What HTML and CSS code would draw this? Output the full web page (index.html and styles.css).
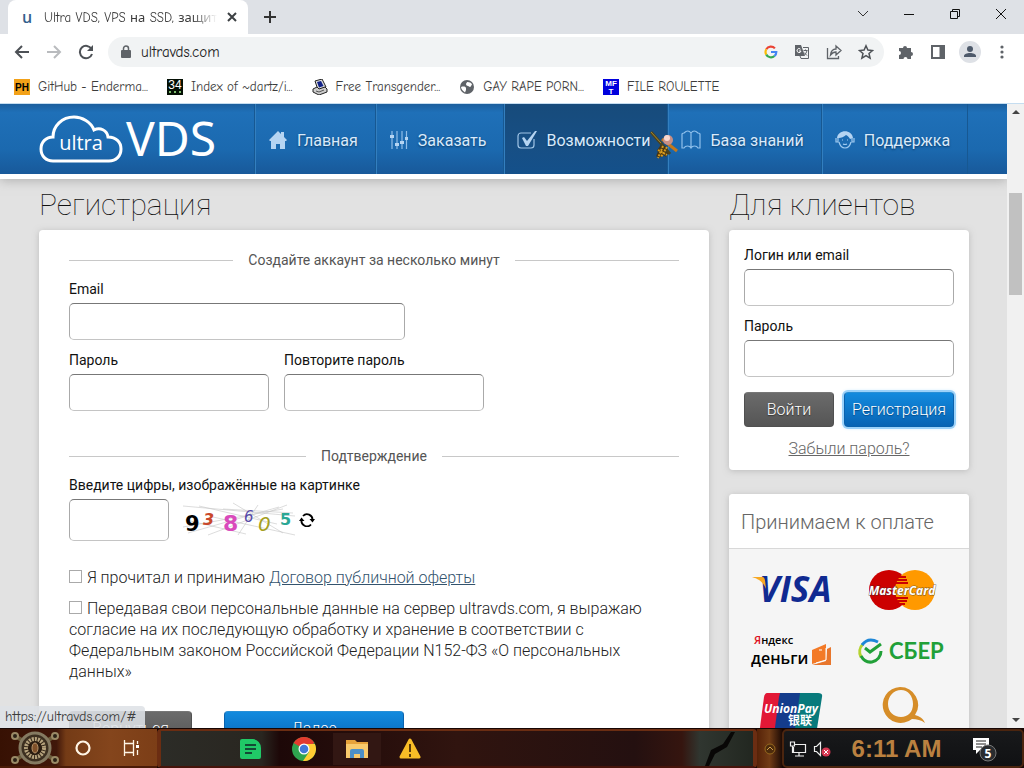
FILE: index.html
```html
<!DOCTYPE html>
<html lang="ru">
<head>
<meta charset="utf-8">
<title>Ultra VDS, VPS на SSD</title>
<link rel="stylesheet" href="styles.css">
</head>
<body>
<div class="tabs">
  <div class="tab">
    <span class="favicon">u</span>
    <span class="tab-title">Ultra VDS, VPS на SSD, защита</span>
    <button class="icon-btn" aria-label="Закрыть вкладку"><svg width="10" height="10" viewBox="0 0 10 10"><path d="M1 1l8 8M9 1l-8 8" stroke="#3c4043" stroke-width="2"/></svg></button>
  </div>
  <button class="icon-btn new-tab" aria-label="Новая вкладка"><svg width="14" height="14" viewBox="0 0 14 14"><path d="M7 1v12M1 7h12" stroke="#333" stroke-width="2"/></svg></button>
  <div class="window-controls">
    <button class="icon-btn" aria-label="Поиск вкладок"><svg width="12" height="12" viewBox="0 0 12 12"><path d="M1 3l5 5 5-5" fill="none" stroke="#333"/></svg></button>
    <button class="icon-btn" aria-label="Свернуть"><svg width="12" height="12" viewBox="0 0 12 12"><path d="M1 6.500h10" stroke="#111"/></svg></button>
    <button class="icon-btn" aria-label="Развернуть"><svg width="12" height="12" viewBox="0 0 12 12"><path d="M1.500 3.500h7v7h-7zM3.500 3.500v-2h7v7h-2" fill="none" stroke="#111"/></svg></button>
    <button class="icon-btn" aria-label="Закрыть"><svg width="12" height="12" viewBox="0 0 12 12"><path d="M1 1l10 10M11 1L1 11" stroke="#111"/></svg></button>
  </div>
</div>
<div class="toolbar">
  <button class="icon-btn" aria-label="Назад"><svg width="16" height="16" viewBox="0 0 16 16"><path d="M15 8H2M8 2L2 8l6 6" fill="none" stroke="#4d5156" stroke-width="2"/></svg></button>
  <button class="icon-btn" aria-label="Вперёд"><svg width="16" height="16" viewBox="0 0 16 16"><path d="M1 8h13M8 2l6 6-6 6" fill="none" stroke="#b9bbbe" stroke-width="2"/></svg></button>
  <button class="icon-btn" aria-label="Обновить"><svg width="16" height="16" viewBox="0 0 16 16"><path d="M13.500 5A6.200 6.200 0 1 0 14 10" fill="none" stroke="#4d5156" stroke-width="2"/><path d="M15 1v6H9z" fill="#4d5156"/></svg></button>
  <div class="omnibox">
    <svg width="10" height="14" viewBox="0 0 10 14"><rect y="5" width="10" height="8" rx="1" fill="#5f6368"/><path d="M2.500 6V3.500a2.500 2.500 0 0 1 5 0V6" fill="none" stroke="#5f6368" stroke-width="1.500"/></svg>
    <input class="address" type="text" value="ultravds.com" aria-label="Адрес">
    <button class="icon-btn" aria-label="Google"><svg width="14" height="14" viewBox="0 0 14 14" fill="none" stroke-width="2.200"><path d="M2.300 4.200A5.300 5.300 0 0 1 10.900 3.400" stroke="#ea4335"/><path d="M2.300 9.600a5.300 5.300 0 0 1 0-5.400" stroke="#fbbc05"/><path d="M10.500 11a5.300 5.300 0 0 1-8.200-1.400" stroke="#34a853"/><path d="M7 7h5.300a5.300 5.300 0 0 1-1.800 4" stroke="#4285f4"/></svg></button>
    <button class="icon-btn" aria-label="Перевести"><svg width="16" height="16" viewBox="0 0 16 16"><path d="M1 1h6l4 11H1z" fill="#5f6368"/><path d="M9 3.500h5.500v11H7L6 12" fill="none" stroke="#5f6368"/><path d="M9.500 6.500h4M11.500 5.500v1M13 6.500c-.5 2-1.500 3.500-2.500 4.500M10 8.500l3 3" fill="none" stroke="#5f6368"/><path d="M6.500 5.200a2 2 0 1 0 .5 1.800H5" fill="none" stroke="#fff"/></svg></button>
    <button class="icon-btn" aria-label="Поделиться"><svg width="16" height="16" viewBox="0 0 16 16" fill="none" stroke="#5f6368" stroke-width="1.300"><path d="M1.500 4v10.500h11V12"/><path d="M4.500 11c.5-4 2.500-6 5.500-6V2l5 4.500-5 4.500V8c-2.500 0-4 1-5.500 3z"/></svg></button>
    <button class="icon-btn" aria-label="В закладки"><svg width="16" height="16" viewBox="0 0 16 16"><path d="M8 1.800l1.900 4.300 4.600.4-3.500 3 1.100 4.600L8 11.700l-4.100 2.400L5 9.500l-3.500-3 4.600-.4z" fill="none" stroke="#4d5156" stroke-width="1.500"/></svg></button>
  </div>
  <div class="tools">
    <button class="icon-btn" aria-label="Расширения"><svg width="16" height="16" viewBox="0 0 16 16"><path d="M1 4h4a2 2 0 1 1 4 0h4v4a2 2 0 1 1 0 4v3H9.500a2 2 0 0 0-4 0H1v-4a2 2 0 0 0 0-4z" fill="#5f6368"/></svg></button>
    <button class="icon-btn" aria-label="Боковая панель"><svg width="14" height="14" viewBox="0 0 14 14"><rect x="1" y="1" width="12" height="12" fill="none" stroke="#5f6368" stroke-width="2"/><path d="M8.500 1H13v12H8.500z" fill="#5f6368"/></svg></button>
    <button class="icon-btn" aria-label="Профиль"><svg width="22" height="22" viewBox="0 0 22 22"><circle cx="11" cy="11" r="11" fill="#dee1e6"/><circle cx="11" cy="8" r="3" fill="#4e5a6b"/><path d="M5 16v-1c0-4 12-4 12 0v1z" fill="#4e5a6b"/></svg></button>
    <button class="icon-btn" aria-label="Меню"><svg width="4" height="14" viewBox="0 0 4 14" fill="#5f6368"><circle cx="2" cy="2" r="1.600"/><circle cx="2" cy="7" r="1.600"/><circle cx="2" cy="12" r="1.600"/></svg></button>
  </div>
</div>
<nav class="bookmarks">
  <a href="#"><svg width="16" height="16" viewBox="0 0 16 16"><rect width="16" height="16" fill="#f2a118"/><text x="8" y="12" class="ph">PH</text></svg>GitHub - Enderma...</a>
  <a href="#"><svg width="16" height="16" viewBox="0 0 16 16"><rect width="16" height="16" fill="#041004"/><text x="8" y="10" class="n34">34</text><path d="M2 12l2 2M4 12l-2 2M7 12l2 2M9 12l-2 2M12 12l2 2M14 12l-2 2" stroke="#7dbb6c"/></svg>Index of ~dartz/i...</a>
  <a href="#"><svg width="16" height="16" viewBox="0 0 16 16"><path d="M3 2l7-2 4 8-8 3z" fill="#ddd" stroke="#222"/><path d="M5 3l4-1 2.500 5-4.500 1.500z" fill="#128"/><path d="M1 10l4-2 2 2 6-2 2 2v3l-8 3-6-3z" fill="#ccc" stroke="#222"/><path d="M4 12l3 1 5-2" fill="none" stroke="#555"/></svg>Free Transgender...</a>
  <a href="#"><svg width="16" height="16" viewBox="0 0 16 16"><circle cx="8" cy="8" r="7" fill="#5f6368"/><path d="M2 8c3-1 5 0 5 1v2l-1 2.500C4 12 2 10 2 8zM8 3c3 0 5 1 5 3-1 0-1 2-2 2s-1-1-2-1-2-1-2-2 1-1 1-2z" fill="#fff"/></svg>GAY RAPE PORN...</a>
  <a href="#"><svg width="16" height="16" viewBox="0 0 16 16"><rect width="16" height="16" fill="#00d"/><text x="8" y="7" class="mft">MF</text><text x="8" y="15" class="mft">T</text></svg>FILE ROULETTE</a>
</nav>

<div class="viewport">
  <div class="site">
    <header class="header">
      <a class="logo" href="#" aria-label="ultra VDS"><svg width="184" height="50" viewBox="0 0 184 50"><path d="M14 46h56c7 0 12-5 12-12s-5-12-13-12c-1-7-8-10-14-7C52 7 43 2 35 2 23 2 14 11 14 22 7 22 2 27 2 34s5 12 12 12z" fill="none" stroke="#fff" stroke-width="3"/><text x="42" y="35" class="logo-small">ultra</text><text x="132" y="41" class="logo-big">VDS</text></svg></a>
      <nav class="menu">
        <a href="#"><svg width="20" height="20" viewBox="0 0 20 20"><path d="M10 1L1 10l1 1h1v8h5v-5h4v5h5v-8h1l1-1-3-3V2h-3v2z" fill="#b5d4f2"/></svg>Главная</a>
        <a href="#"><svg width="20" height="20" viewBox="0 0 20 20"><path d="M3 1v18M8 1v18M13 1v18M17.500 1v18" stroke="#8fbde8" stroke-width="1.200"/><path d="M1 5h4v3H1zM6 13h4v3H6zM11 11h4v3h-4zM16 7h3v3h-3z" fill="#b5d4f2"/></svg>Заказать</a>
        <a href="#" class="active"><svg width="20" height="20" viewBox="0 0 20 20"><path d="M14 3H4a3 3 0 0 0-3 3v9a3 3 0 0 0 3 3h10a3 3 0 0 0 3-3V9" fill="none" stroke="#9fc4e6" stroke-width="1.200"/><path d="M5 8l2-1 3 4 8-10 2 0-9 15H9z" fill="#b5d4f2"/></svg>Возможности
          <svg class="pointer" width="30" height="30" viewBox="0 0 30 30"><path d="M2 1L21 23" stroke="#4b4320" stroke-width="3"/><path d="M2 1l10 11" stroke="#a68a2c"/><path d="M28 20L13 8" stroke="#c4781c" stroke-width="3"/><circle cx="19" cy="9" r="5" fill="#c98f84"/><circle cx="18" cy="7" r="3" fill="#f7d8d0"/><path d="M13 15l-4 11M9 18l9 6M17 16l-6 9" stroke="#4a3510" stroke-width="4"/><path d="M14 15L9 27M9 19l9 5M18 16l-6 10" stroke="#d59a1e" stroke-width="2" stroke-dasharray="2 1"/></svg></a>
        <a href="#"><svg width="20" height="20" viewBox="0 0 20 20"><path d="M1 18V4q1-1 2-1 4-4 7 0 3-4 7 0 1 0 2 1v14h-2q-1-2-3.500-2T10 18q-1-2-3.500-2T3 18zM10 3v15" fill="none" stroke="#8fc0ec" stroke-width="1.200"/></svg>База знаний</a>
        <a href="#"><svg width="20" height="20" viewBox="0 0 20 20"><path d="M2 8C3-1 17-1 18 8l-3 1c-1-2-2-3-4-4-2 2-5 3-7 3z" fill="#b5d4f2"/><path d="M1 8v4h2V8M19 8v4h-2V8M4 12c2 8 10 8 12 0M7 10h1M12 10h1M8 14q2 1 4 0" fill="none" stroke="#9fcaf0" stroke-width="1.200"/></svg>Поддержка</a>
      </nav>
    </header>
    <main class="content">
      <section>
        <h1>Регистрация</h1>
        <form class="card form">
          <h2 class="legend">Создайте аккаунт за несколько минут</h2>
          <div class="field"><label for="email">Email</label><input class="box wide" id="email" type="text"></div>
          <div class="row">
            <div class="field"><label for="pass">Пароль</label><input class="box half" id="pass" type="password"></div>
            <div class="field"><label for="pass2">Повторите пароль</label><input class="box half" id="pass2" type="password"></div>
          </div>
          <h2 class="legend second">Подтверждение</h2>
          <div class="field">
            <label for="code">Введите цифры, изображённые на картинке</label>
            <div class="captcha"><input class="box code" id="code" type="text">
              <svg width="114" height="38" viewBox="0 0 114 38"><path d="M0 5l112 10M5 32L96 6M16 5l78 18M25 34L104 4M3 19l60 14M50 2l50 30M0 26l100-18M55 34l20-30M30 16l82 18M40 8l70 4" stroke="#c4c4c4" stroke-width=".6" fill="none"/><text x="2" y="30" class="d1">9</text><text x="20" y="24" class="d2">3</text><text x="40" y="30" class="d3">8</text><text x="61" y="21" class="d4">6</text><text x="75" y="30" class="d5">0</text><text x="97" y="24" class="d6">5</text></svg>
              <button type="button" class="icon-btn" aria-label="Обновить картинку"><svg width="16" height="14" viewBox="0 0 16 14"><path d="M4 3a5.500 5.500 0 0 1 9.500 4M12 11.500A5.500 5.500 0 0 1 2.500 7" fill="none" stroke="#000" stroke-width="1.800"/><path d="M10.500 6H16l-2.500 3.500zM0 8h5.500L2.500 4.500z"/></svg></button>
            </div>
          </div>
          <div class="agree"><input type="checkbox" id="a1"><label for="a1"> Я прочитал и принимаю</label> <a href="#">Договор публичной оферты</a></div>
          <div class="agree"><input type="checkbox" id="a2"><label for="a2"> Передавая свои персональные данные на сервер ultravds.com, я выражаю согласие на их последующую обработку и хранение в соответствии с Федеральным законом Российской Федерации N152-ФЗ «О персональных данных»</label></div>
          <div class="actions"><button type="button" class="btn back">Вернуться</button><button type="button" class="btn blue next">Далее</button></div>
        </form>
      </section>
      <aside>
        <h1>Для клиентов</h1>
        <form class="card login">
          <div class="field"><label for="login">Логин или email</label><input class="box" id="login" type="text"></div>
          <div class="field"><label for="lpass">Пароль</label><input class="box" id="lpass" type="password"></div>
          <div class="login-actions"><button type="button" class="btn">Войти</button><button type="button" class="btn blue focused">Регистрация</button></div>
          <a class="forgot" href="#">Забыли пароль?</a>
        </form>
        <div class="card pay">
          <h2>Принимаем к оплате</h2>
          <div class="brands">
            <svg width="84" height="44" viewBox="0 0 84 44"><text x="9" y="33" class="visa">VISA</text><path d="M2 8h10c3 0 3 2 4 12C13 13 9 10 2 8z" fill="#f7a823"/></svg>
            <svg width="84" height="44" viewBox="0 0 84 44"><circle cx="29" cy="21" r="20" fill="#c00"/><circle cx="55" cy="21" r="20" fill="#f90"/><path d="M37 8h9M36 11h11M36 14h12M36 29h12M38 32h9M38 35h7" stroke="#c00" stroke-width="2"/><text x="42" y="26" class="mc">MasterCard</text></svg>
            <svg width="84" height="44" viewBox="0 0 84 44"><text x="4" y="14" class="ya"><tspan fill="#d12">Я</tspan>ндекс</text><text x="1" y="34" class="dengi">деньги</text><path d="M62 20l14-6v16l-14 4z" fill="#f37a27"/><path d="M62 35l14-4 1-12 4-2v18z" fill="#e8762c"/><path d="M66 33l10-3v-12M69 20h3" stroke="#fff" fill="none"/></svg>
            <svg width="90" height="44" viewBox="0 0 90 44"><path d="M4 27A11 11 0 0 1 6 14" fill="none" stroke="#b5d331" stroke-width="3"/><path d="M5 15Q11 7 21 12" fill="none" stroke="#1e87d7" stroke-width="3"/><path d="M4 26Q8 33 15 32A11 11 0 0 0 24 21" fill="none" stroke="#21a038" stroke-width="3"/><path d="M8 18l5 4 11-8" fill="none" stroke="#21a038" stroke-width="3"/><text x="32" y="29" class="sber">СБЕР</text></svg>
            <svg width="84" height="44" viewBox="0 0 84 44"><path d="M17 2h20l-6 42H9l5-38q1-4 3-4z" fill="#e21836"/><path d="M30 2h24l-6 42H24l5-38z" fill="#143c8c"/><path d="M50 2h18q5 0 4 4l-6 38H44z" fill="#087a7c"/><text x="41" y="22" class="union">UnionPay</text><text x="50" y="34" class="cjk">银联</text></svg>
            <svg width="76" height="44" viewBox="0 0 76 44"><path fill-rule="evenodd" d="M36-4a18 18 0 1 0 12 32c5 0 9 1 13 4-2-5-6-7-10-8A18 18 0 0 0 36-4zm1 3c7 0 12 6 12 14s-5 13-12 13-13-5-13-13S30-1 37-1z" fill="#d68d28"/></svg>
          </div>
        </div>
      </aside>
    </main>
  </div>
  <div class="scrollbar"><span class="up"></span><span class="thumb"></span><span class="down"></span></div>
  <div class="status">https://ultravds.com/#</div>
</div>

<footer class="taskbar">
  <div class="start">
    <button class="icon-btn" aria-label="Пуск"><svg width="50" height="34" viewBox="0 0 50 34"><path d="M5 5l40 24M5 29L45 5" stroke="#6b5b3b" stroke-width="4"/><g fill="#2c2216" stroke="#9a8a66" stroke-width="2"><circle cx="5" cy="5" r="3"/><circle cx="45" cy="5" r="3"/><circle cx="5" cy="29" r="3"/><circle cx="45" cy="29" r="3"/></g><circle cx="25" cy="17" r="15" fill="#3c2f20" stroke="#857a61" stroke-width="3"/><circle cx="25" cy="17" r="9" fill="#2a1c10" stroke="#b6a37d" stroke-width="4" stroke-dasharray="2 1"/><ellipse cx="25" cy="17" rx="3" ry="5" fill="#80512a" stroke="#b8946a"/></svg></button>
    <button class="icon-btn" aria-label="Поиск"><svg width="16" height="16" viewBox="0 0 16 16"><circle cx="8" cy="8" r="6.500" fill="none" stroke="#fff5e5" stroke-width="2.200"/></svg></button>
    <button class="icon-btn task-view" aria-label="Представление задач"><svg width="18" height="16" viewBox="0 0 18 16"><path d="M2.500 0v3.500h9V0M2.500 16v-3.500h9V16M2.500 3.500h9v9h-9zM15.500 1v3M15.500 10v5" fill="none" stroke="#fff5e5" stroke-width="1.300"/><path d="M14 5h3v3h-3z" fill="#fff"/></svg></button>
  </div>
  <div class="apps">
    <button class="icon-btn app" aria-label="Заметки"><svg width="24" height="22" viewBox="0 0 24 22"><path d="M3 1h11a9 9 0 0 1 8 9v9q0 2-2 2H3q-2 0-2-2V3q0-2 2-2z" fill="#20c967"/><path d="M6 7h11M6 11h11M6 15h7" stroke="#134b35" stroke-width="1.800"/></svg></button>
    <button class="icon-btn app" aria-label="Chrome"><svg width="24" height="24" viewBox="0 0 24 24"><circle cx="12" cy="12" r="12" fill="#2fa44f"/><path d="M12 12L1.600 6a12 12 0 0 1 20.800 0z" fill="#e33b2e"/><path d="M12 7h10.900A12 12 0 0 1 11 24l6-9z" fill="#fc3"/><circle cx="12" cy="12" r="5.500" fill="#fff"/><circle cx="12" cy="12" r="4.300" fill="#4279d8"/></svg></button>
    <button class="icon-btn app" aria-label="Проводник"><svg width="24" height="20" viewBox="0 0 24 20"><path d="M1 1h9l2 2h11v16H1z" fill="#e6a23a"/><path d="M1 5h22v14H1z" fill="#f8ca6d"/><path d="M5 19v-7q0-2 2-2h10q2 0 2 2v7h-4v-4H9v4z" fill="#4c8fc7"/></svg></button>
    <button class="icon-btn app" aria-label="Предупреждение"><svg width="24" height="22" viewBox="0 0 24 22"><path d="M12 2l9 17H3z" fill="#f9bd27" stroke="#f9bd27" stroke-width="3" stroke-linejoin="round"/><path d="M12 6v8M12 16v3" stroke="#5b3b08" stroke-width="2"/></svg></button>
    <svg class="crack" width="44" height="34" viewBox="0 0 44 34"><path d="M38 0l-8 12-12 6-6 16h4l6-12 12-7 8-15z" fill="#080706"/></svg>
  </div>
  <div class="divider"><svg width="12" height="12" viewBox="0 0 12 12"><circle cx="6" cy="6" r="5" fill="#4d2b0c" stroke="#96691e"/><path d="M3 7l3-3 3 3" fill="none" stroke="#d0a04c"/></svg></div>
  <div class="tray">
    <svg width="18" height="16" viewBox="0 0 18 16"><path d="M5 3.500h11.500v8h-12V6M10 12v3M6 15h9M1.500 1v4h4V1zM3.500 5v7" fill="none" stroke="#eee" stroke-width="1.200"/></svg>
    <svg width="18" height="16" viewBox="0 0 18 16"><path d="M1.500 5.500h2l4-4v13l-4-4h-2z" fill="none" stroke="#eee" stroke-width="1.200"/><circle cx="13" cy="11" r="4.500" fill="#d83852"/><path d="M11 9l4 4M15 9l-4 4" stroke="#fff"/></svg>
    <time class="clock">6:11 AM</time>
    <button class="icon-btn" aria-label="Уведомления"><svg width="26" height="26" viewBox="0 0 26 26"><path d="M1 2h16v12H8l-4 4v-4H1z" fill="#fff"/><path d="M4 5h10M4 8h10M4 11h6" stroke="#222"/><circle cx="16" cy="17" r="8" fill="#292c2f" stroke="#777"/><text x="16" y="22" class="badge">5</text></svg></button>
  </div>
</footer>
</body>
</html>
```
FILE: styles.css
```css
* { box-sizing: border-box; }
body { margin: 0; height: 100vh; display: flex; flex-direction: column; overflow: hidden; font-family: Roboto, "Noto Sans", sans-serif; font-size: 16px; background: #fff; }
svg { display: block; flex: none; }
button, input { font: inherit; }
.icon-btn { border: 0; padding: 0; background: none; display: flex; align-items: center; justify-content: center; flex: none; }

.tabs, .toolbar, .bookmarks, .status { font-family: "Comic Sans MS", "Comic Neue", "Noto Sans", sans-serif; font-size: 13px; color: #3c3c3c; }
.tabs { flex: none; height: 34px; background: #dee1e6; display: flex; align-items: center; }
.tab { margin-left: 8px; width: 240px; height: 34px; background: #fff; border-radius: 8px 8px 0 0; display: flex; align-items: center; padding: 0 11px 0 14px; gap: 10px; }
.favicon { width: 12px; font: 600 16px "Open Sans", sans-serif; color: #35618d; }
.tab-title { flex: 1; overflow: hidden; white-space: nowrap; -webkit-mask-image: linear-gradient(90deg, #000 85%, transparent); }
.new-tab { margin-left: 15px; }
.window-controls { margin-left: auto; display: flex; gap: 34px; padding: 0 17px 6px 0; }

.toolbar { flex: none; height: 36px; display: flex; align-items: center; padding: 0 6px 0 14px; gap: 16px; }
.tools { display: flex; margin-left: -10px; }
.tools .icon-btn { width: 32px; }
.omnibox { flex: 1; min-width: 0; height: 30px; border-radius: 15px; background: #f1f3f4; display: flex; align-items: center; gap: 16px; padding: 0 10px 0 13px; margin-left: -2px; }
.address { flex: 1; min-width: 0; border: 0; outline: 0; padding: 0; margin-left: -6px; background: none; font-size: 15px; color: #222; }
.bookmarks { flex: none; height: 34px; display: flex; align-items: center; gap: 19px; padding: 0 14px; border-bottom: 1px solid #c5ddf0; }
.bookmarks a { display: flex; align-items: center; gap: 8px; color: inherit; text-decoration: none; white-space: nowrap; }
.ph { font: 700 10px "Liberation Sans", sans-serif; text-anchor: middle; }
.n34 { font: 12px "Liberation Sans", sans-serif; fill: #fff; text-anchor: middle; }
.mft { font: 700 8px "Liberation Sans", sans-serif; fill: #fff; text-anchor: middle; }

.viewport { flex: 1; min-height: 0; display: flex; position: relative; overflow: hidden; }
.site { flex: 1; min-width: 0; background: #e2e2e2; overflow: hidden; }
.header { height: 75px; display: flex; background: linear-gradient(#1b5f9e, #1f70b8 12%, #1b69af 65%, #18599a); border-bottom: 5px solid #fff; box-shadow: 0 2px 10px #8888; }
.logo { width: 254px; padding: 11px 0 0 39px; flex: none; }
.logo-small { font: 20px "Open Sans", sans-serif; fill: #fff; text-anchor: middle; }
.logo-big { font: 48px "Noto Sans", sans-serif; fill: #fff; text-anchor: middle; }
.menu { display: flex; color: #d9eafb; font-size: 16px; text-shadow: 0 1px 2px #0c3a66; border-right: 1px solid #175892; }
.menu a { display: flex; align-items: center; gap: 9px; padding: 2px 17px 0 13px; color: inherit; text-decoration: none; white-space: nowrap; border-left: 1px solid #175892; box-shadow: inset 1px 0 #337fbf; }
.menu a.active { position: relative; background: linear-gradient(#174b7b, #174f85 60%, #14508a); }
.pointer { position: absolute; right: -12px; top: 27px; z-index: 2; }

.content { display: grid; grid-template-columns: minmax(0, 1fr) 240px; gap: 20px; padding: 0 38px 0 39px; }
h1 { margin: 0; height: 51px; padding-top: 7px; font-size: 30px; line-height: 38px; font-weight: 100; color: #111; }
.card { background: #fff; border-radius: 4px; box-shadow: 0 1px 6px #9998; }
.form { padding: 20px 30px 30px; }
.legend { display: flex; align-items: center; gap: 15px; margin: 0 0 9px; font-size: 14px; line-height: 20px; font-weight: 400; color: #555; }
.legend::before, .legend::after { content: ""; flex: 1; height: 1px; background: #c8c8c8; }
.second { margin-top: 25px; }
.field { display: flex; flex-direction: column; gap: 4px; margin-bottom: 10px; font-size: 14px; line-height: 20px; color: #111; }
.row { display: flex; gap: 15px; }
.box { width: 100%; height: 37px; padding: 0 10px; border: 1px solid #aaa; border-top-color: #777; border-bottom-color: #c4c4c4; border-radius: 5px; background: #fff; }
.wide { width: 55%; }
.half { width: 200px; }
.captcha { display: flex; align-items: center; gap: 14px; }
.code { width: 100px; height: 42px; }
.captcha .icon-btn { margin-left: -12px; }
.d1, .d2, .d3, .d4, .d5, .d6 { font-family: "DejaVu Sans", sans-serif; }
.d1 { font-size: 21px; font-weight: 700; }
.d2 { font-size: 16px; fill: #c9482c; font-style: italic; font-weight: 700; }
.d3 { font-size: 22px; font-weight: 700; fill: #d94abb; }
.d4 { font-size: 15px; font-style: italic; fill: #5448a8; }
.d5 { font-size: 20px; font-style: italic; fill: #a6a01e; }
.d6 { font-size: 16px; font-weight: 700; fill: #2ba795; }
.agree { font-weight: 300; font-size: 16px; line-height: 21px; color: #222; margin-bottom: 10px; max-width: 590px; }
.field + .agree { margin-top: 26px; }
.agree input { appearance: none; width: 13px; height: 13px; margin: 0 1px 0 0; border: 1px solid #aaa; background: #fff; }
.agree a { color: #33536d; }
.actions { display: flex; gap: 32px; margin-top: 29px; }
.btn { height: 35px; padding: 0 8px; border: 1px solid #505050; border-top-color: #777; border-radius: 4px; background: linear-gradient(#6b6b6b, #555); color: #fff; font-size: 16px; font-weight: 300; text-shadow: 0 1px 1px #333; white-space: nowrap; }
.blue { border-color: #0a62ad; border-top-color: #288fd6; background: linear-gradient(#128ade, #0864b4); text-shadow: 0 1px 1px #064b86; }
.back { width: 123px; }
.next { width: 180px; }

.login { padding: 15px 15px 10px; }
.login-actions { display: grid; grid-template-columns: 90px minmax(0, 1fr); gap: 10px; margin-top: 15px; }
.login-actions .btn { padding: 0; }
.focused { box-shadow: 0 0 0 2px #9bd2fa, 0 0 4px #9bd2fa; }
.forgot { display: block; text-align: center; margin-top: 12px; padding-bottom: 1px; line-height: 20px; font-weight: 300; color: #666; }
.pay { margin-top: 24px; background: #f5f5f5; overflow: hidden; }
.pay h2 { margin: 0; padding: 0 12px; font-size: 20px; line-height: 56px; height: 55px; font-weight: 300; color: #666; background: #fff; border-bottom: 1px solid #d8d8d8; }
.brands { display: grid; grid-template-columns: 1fr 1fr; justify-items: center; row-gap: 17px; padding: 20px 12px 20px 8px; }
.brands svg { overflow: visible; }
.visa { font: italic 700 35px "Open Sans", sans-serif; fill: #102a91; }
.mc { font: italic 700 12px "Open Sans", sans-serif; fill: #fff; text-anchor: middle; stroke: #333a; stroke-width: 1px; paint-order: stroke; }
.ya { font: 600 11px "Open Sans", sans-serif; }
.dengi { font: 600 16px "Open Sans", sans-serif; }
.sber { font: 700 22px Lato, "Open Sans", sans-serif; fill: #21a038; }
.union { font: italic 700 12px "Open Sans", sans-serif; fill: #fff; text-anchor: middle; }
.cjk { font: 700 12px "Noto Sans CJK SC", sans-serif; fill: #fff; text-anchor: middle; }

.scrollbar { width: 17px; flex: none; background: #f1f1f1; display: flex; flex-direction: column; align-items: center; padding: 6px 0; }
.up { border: 4px solid transparent; border-top: 0; border-bottom-color: #444; }
.thumb { width: 13px; height: 102px; margin-top: 79px; background: #c1c1c1; }
.down { border: 4px solid transparent; border-bottom: 0; border-top-color: #444; margin-top: auto; }
.status { position: absolute; left: 0; bottom: 0; height: 22px; padding: 0 8px 0 5px; font-size: 14px; line-height: 22px; background: #dee1e6e0; border-top-right-radius: 4px; white-space: nowrap; }

.taskbar { flex: none; height: 40px; display: flex; background: #160604; border-top: 1px solid #160604; }
.start { width: 157px; display: flex; align-items: center; gap: 15px; padding-left: 10px; background: linear-gradient(90deg, #371103, #40170a 36%, #743b16 42%, #84451c 70%, #7c3e17); border-bottom: 2px solid #4b1b07; }
.task-view { margin-left: 16px; }
.apps { flex: 1; display: flex; align-items: center; gap: 5px; padding-left: 66px; border: solid #6b2d12; border-width: 2px 4px; border-bottom-color: #46140b; border-radius: 4px; background: linear-gradient(90deg, #2c2c27, #292620 17%, #1d0808 20%, #30140f 50%, #241010 80%, #35150f 88%, #303630 91%, #222720); }
.app { width: 48px; height: 32px; }
.app:nth-child(3) { background: #321713; }
.crack { margin-left: auto; margin-right: 16px; }
.divider { width: 25px; display: flex; align-items: center; justify-content: center; background: linear-gradient(90deg, #562208, #713c16, #1d0b05); }
.tray { width: 242px; display: flex; align-items: center; gap: 6px; padding-left: 5px; background: linear-gradient(#18191b, #101113); border: 2px solid #4b250f; border-radius: 5px; }
.clock { flex: 1; padding-right: 10px; text-align: center; color: #ba8140; font: 700 24px "Liberation Sans", sans-serif; white-space: nowrap; }
.tray .icon-btn { margin-right: 24px; }
.badge { font: 700 12px "Open Sans", sans-serif; fill: #fff; text-anchor: middle; }
```
